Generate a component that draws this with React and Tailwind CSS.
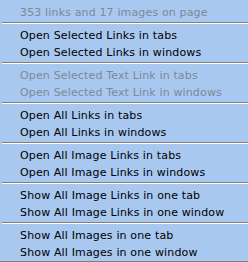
const groups = [
  { items: ["Open Selected Links in tabs", "Open Selected Links in windows"] },
  { items: ["Open Selected Text Link in tabs", "Open Selected Text Link in windows"], disabled: true },
  { items: ["Open All Links in tabs", "Open All Links in windows"] },
  { items: ["Open All Image Links in tabs", "Open All Image Links in windows"] },
  { items: ["Show All Image Links in one tab", "Show All Image Links in one window"] },
  { items: ["Show All Images in one tab", "Show All Images in one window"] },
];

const Separator = () => (
  <div className="ml-[2px]">
    <div className="h-px bg-[#808080]" />
    <div className="h-px bg-white" />
  </div>
);

export default function App() {
  return (
    <div
      className="w-[248px] h-[262px] bg-[#a8c8f0] flex flex-col text-[11px] leading-[17px] tracking-[0.15px] overflow-hidden"
      style={{ fontFamily: '"DejaVu Sans", Verdana, sans-serif' }}
    >
      <div className="h-[22px] shrink-0 pl-[20px] pt-[4px] text-[#7c8898]">353 links and 17 images on page</div>
      {groups.map((g, i) => (
        <div key={i} className="shrink-0">
          <Separator />
          <div className={i === groups.length - 1 ? "pt-[3px]" : "pt-[3px] pb-[1px]"}>
            {g.items.map((t) => (
              <div
                key={t}
                className={`h-[17px] pl-[20px] whitespace-nowrap ${g.disabled ? "text-[#7c8898]" : "text-black"}`}
              >
                {t}
              </div>
            ))}
          </div>
        </div>
      ))}
      <div className="mt-auto h-px shrink-0 bg-[#808080]" />
      <div className="h-px shrink-0 bg-[#404040]" />
    </div>
  );
}
